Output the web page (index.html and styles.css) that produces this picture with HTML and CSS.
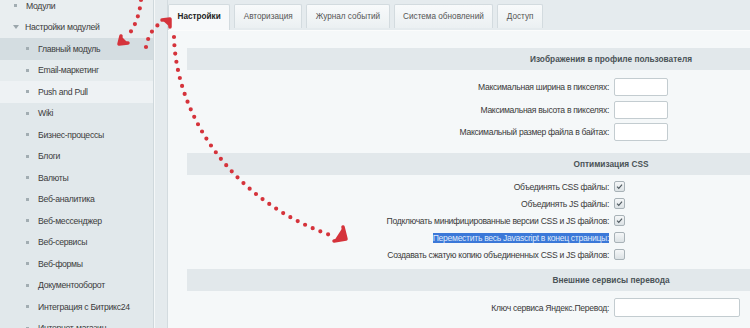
FILE: index.html
```html
<!DOCTYPE html>
<html>
<head>
  <title>Настройки модулей</title>
  <link rel="stylesheet" href="styles.css">
</head>
<body>
    <div class="layout">
        <aside class="menu">
            <div class="menu-list">
                <div class="menu-item top"><span class="dot"></span>Модули</div>
                <div class="menu-item top"><span class="caret"></span>Настройки модулей</div>
                <div class="menu-item sub selected"><span class="dot"></span>Главный модуль</div>
                <div class="menu-item sub hover-1"><span class="dot"></span>Email-маркетинг</div>
                <div class="menu-item sub hover-2"><span class="dot"></span>Push and Pull</div>
                <div class="menu-item sub"><span class="dot"></span>Wiki</div>
                <div class="menu-item sub"><span class="dot"></span>Бизнес-процессы</div>
                <div class="menu-item sub"><span class="dot"></span>Блоги</div>
                <div class="menu-item sub"><span class="dot"></span>Валюты</div>
                <div class="menu-item sub"><span class="dot"></span>Веб-аналитика</div>
                <div class="menu-item sub"><span class="dot"></span>Веб-мессенджер</div>
                <div class="menu-item sub"><span class="dot"></span>Веб-сервисы</div>
                <div class="menu-item sub"><span class="dot"></span>Веб-формы</div>
                <div class="menu-item sub"><span class="dot"></span>Документооборот</div>
                <div class="menu-item sub"><span class="dot"></span>Интеграция с Битрикс24</div>
                <div class="menu-item sub"><span class="dot"></span>Интернет-магазин</div>
            </div>
        </aside>
        <div class="splitter"></div>

        <main class="page">
            <div class="tabs">
                <div class="tab active">Настройки</div>
                <div class="tab">Авторизация</div>
                <div class="tab">Журнал событий</div>
                <div class="tab">Система обновлений</div>
                <div class="tab">Доступ</div>
            </div>

            <div class="tab-body">
                <div class="form">
                    <div class="heading">Изображения в профиле пользователя</div>
                    <div class="group first">
                        <div class="row">
                            <label>Максимальная ширина в пикселях:</label>
                            <div class="value"><input type="text" class="field"></div>
                        </div>
                        <div class="row">
                            <label>Максимальная высота в пикселях:</label>
                            <div class="value"><input type="text" class="field"></div>
                        </div>
                        <div class="row">
                            <label>Максимальный размер файла в байтах:</label>
                            <div class="value"><input type="text" class="field"></div>
                        </div>
                    </div>

                    <div class="heading">Оптимизация CSS</div>
                    <div class="group checks">
                        <div class="row">
                            <label>Объединять CSS файлы:</label>
                            <div class="value"><span class="check on"><svg viewBox="0 0 11 11"><path d="M2.5 5.6 L4.6 7.8 L8.6 3.2" /></svg></span></div>
                        </div>
                        <div class="row">
                            <label>Объединять JS файлы:</label>
                            <div class="value"><span class="check on"><svg viewBox="0 0 11 11"><path d="M2.5 5.6 L4.6 7.8 L8.6 3.2" /></svg></span></div>
                        </div>
                        <div class="row">
                            <label>Подключать минифицированные версии CSS и JS файлов:</label>
                            <div class="value"><span class="check on"><svg viewBox="0 0 11 11"><path d="M2.5 5.6 L4.6 7.8 L8.6 3.2" /></svg></span></div>
                        </div>
                        <div class="row">
                            <label><span class="selected-text">Переместить весь Javascript в конец страницы:</span></label>
                            <div class="value"><span class="check"></span></div>
                        </div>
                        <div class="row">
                            <label>Создавать сжатую копию объединенных CSS и JS файлов:</label>
                            <div class="value"><span class="check"></span></div>
                        </div>
                    </div>

                    <div class="heading">Внешние сервисы перевода</div>
                    <div class="group last">
                        <div class="row">
                            <label>Ключ сервиса Яндекс.Перевод:</label>
                            <div class="value"><input type="text" class="field wide"></div>
                        </div>
                    </div>
                </div>
            </div>
        </main>
    </div>

    <!-- red dotted pointers drawn on top of the screenshot -->
    <svg class="arrows" width="750" height="328" viewBox="0 0 750 328">
        <g class="dots">
            <path d="M141 0 Q139 22 127 37" />
            <path d="M146 47 Q149 30 162 22" />
            <path d="M174 37 C176 115 232 202 333 236" />
        </g>
        <g class="heads">
            <path d="M121 36 L119 44 L128 43" />
            <path d="M162 20 L170 19 L170 27" />
            <path d="M343 227 L346 239 L334 241" />
        </g>
    </svg>
</body>
</html>
```

FILE: styles.css
```css
body {
    margin: 0;
    padding: 0;
    font-family: 'Liberation Sans', Arial, sans-serif;
    font-size: 8.6px;
    letter-spacing: -0.3px;
    color: #3a3a3a;
    background-color: #f5f8f9;
    overflow: hidden;
}

.layout {
    display: flex;
    height: 328px;
    overflow: hidden;
}

/* left menu */

.menu {
    width: 153px;
    flex-shrink: 0;
    background-color: #e1e8eb;
    border-right: 1px solid #cfd8dc;
    overflow: hidden;
}

.menu-list {
    margin-top: -5px;
}

.menu-item {
    height: 21.5px;
    display: flex;
    align-items: center;
    padding-left: 14px;
    font-size: 8.7px;
    color: #3c3c3c;
    white-space: nowrap;
}

.menu-item.top {
    background-color: #e9eef0;
}

.menu-item.sub {
    padding-left: 26px;
}

.menu-item.selected {
    background-color: #d4dde1;
}

.menu-item.hover-1 {
    background-color: #e6ecee;
}

.menu-item.hover-2 {
    background-color: #eef2f4;
}

.dot {
    width: 3px;
    height: 3px;
    background-color: #a2adb2;
    margin-right: 9px;
    flex-shrink: 0;
}

.caret {
    width: 0;
    height: 0;
    border-left: 3px solid transparent;
    border-right: 3px solid transparent;
    border-top: 4px solid #9ba6ab;
    margin-right: 6px;
    margin-left: -1px;
}

.splitter {
    width: 12px;
    flex-shrink: 0;
    background-color: #e4eaed;
    border-left: 1px solid #f4f7f8;
    border-right: 1px solid #d3dbdf;
}

/* tabs */

.page {
    flex: 1;
    min-width: 0;
    overflow: hidden;
}

.tabs {
    height: 26px;
    padding-top: 4px;
    display: flex;
    align-items: flex-start;
    gap: 4px;
    background-color: #e5ebee;
}

.tab {
    height: 23px;
    line-height: 23px;
    padding: 0 8.5px;
    border: 1px solid #d3dbdf;
    border-bottom: none;
    border-radius: 2px 2px 0 0;
    background: linear-gradient(#f8fafb, #ebf0f2);
    font-size: 8.2px;
    letter-spacing: 0;
    color: #555;
    white-space: nowrap;
}

.tab.active {
    height: 25px;
    background: #f7f9fa;
    color: #222;
    font-weight: bold;
}

/* settings form */

.tab-body {
    padding: 17px 0 0 19px;
    background-color: #f5f8f9;
    border-top: 1px solid #fbfcfc;
}

.form {
    width: 848px;
}

.heading {
    height: 22px;
    line-height: 22px;
    text-align: center;
    background-color: #e2e8eb;
    font-size: 8.3px;
    letter-spacing: 0;
    font-weight: bold;
    color: #4a5357;
}

.group {
    margin-bottom: 9px;
}

.group.first {
    padding-top: 6px;
}

.group.first .row {
    height: 22.5px;
}

.group.checks {
    padding-top: 3.5px;
    margin-bottom: 5.5px;
}

.group.checks .row {
    height: 17px;
}

.group.last {
    padding-top: 6px;
}

.group.last .row {
    height: 22px;
}

.row {
    display: grid;
    grid-template-columns: 426px 1fr;
    align-items: center;
}

.row label {
    text-align: right;
    padding-right: 4px;
    white-space: nowrap;
}

.value {
    display: flex;
    align-items: center;
    padding-left: 1px;
}

.field {
    width: 54px;
    height: 18px;
    box-sizing: border-box;
    border: 1px solid #c3ccd0;
    border-radius: 2px;
    background-color: #fff;
    margin: 0;
    padding: 0 3px;
    font-size: 8.6px;
}

.field.wide {
    width: 126px;
    height: 19px;
}

.check {
    width: 11px;
    height: 11px;
    box-sizing: border-box;
    border: 1px solid #a8b2b7;
    border-radius: 2px;
    background: linear-gradient(#f5f7f8, #dce2e5);
    display: inline-block;
}

.check svg {
    display: block;
    width: 9px;
    height: 9px;
}

.check path {
    fill: none;
    stroke: #4f5a60;
    stroke-width: 1.4;
}

.selected-text {
    background-color: #3b78d8;
    color: #dfe9fb;
}

/* overlay pointers */

.arrows {
    position: absolute;
    top: 0;
    left: 0;
    pointer-events: none;
}

.arrows .dots path {
    fill: none;
    stroke: #d5333b;
    stroke-width: 4.2;
    stroke-linecap: round;
    stroke-dasharray: 0 8.3;
}

.arrows .heads path {
    fill: #d5333b;
    stroke: #d5333b;
    stroke-width: 3.5;
    stroke-linejoin: round;
    stroke-linecap: round;
}
```
